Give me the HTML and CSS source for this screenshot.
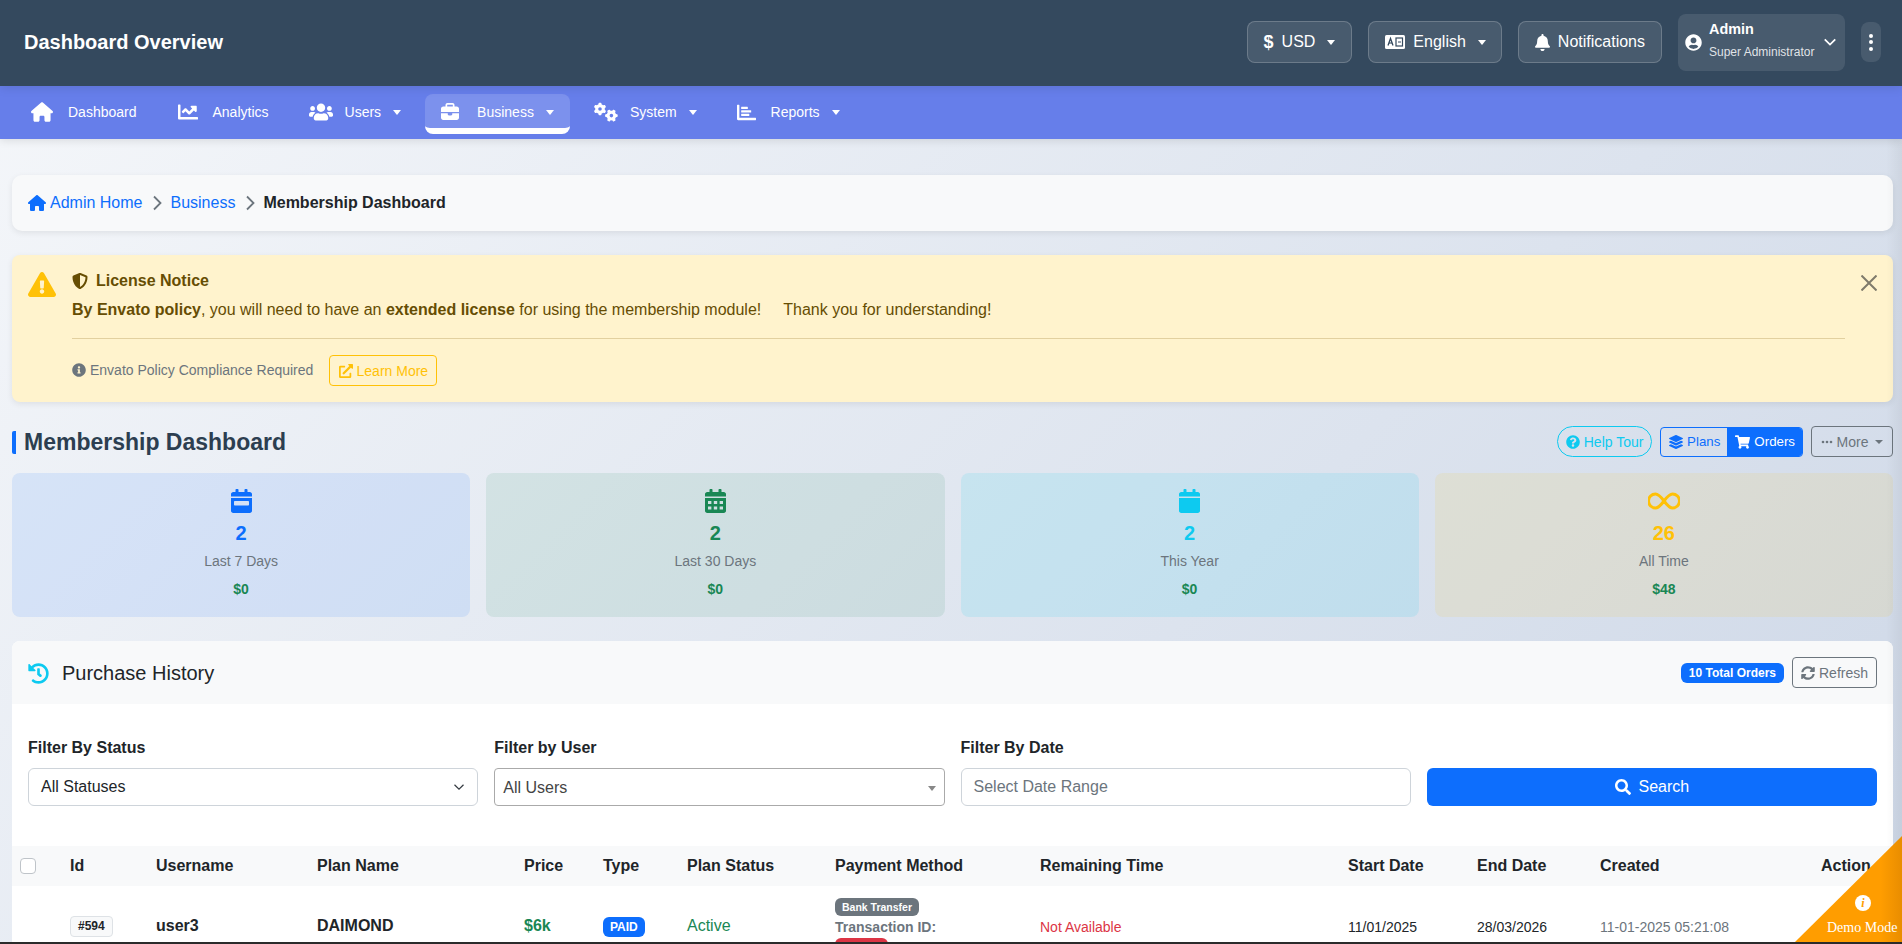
FILE: index.html
```html
<!DOCTYPE html>
<html lang="en">
<head>
  <meta charset="UTF-8" />
  <meta name="viewport" content="width=device-width, initial-scale=1.0" />
  <title>Membership Dashboard</title>
  <link rel="stylesheet" href="styles.css">
</head>
<body>
<div class="page">
  <header class="topbar">
    <div class="topbar-title">Dashboard Overview</div>
    <div class="topbar-actions">
      <button class="top-btn"><span class="dollar">$</span>USD<span class="caret"></span></button>
      <button class="top-btn top-btn-lang">
        <svg class="lang-icon" viewBox="0 0 20 14"><rect width="20" height="14" rx="1.5" fill="#fff"/><polyline points="3,10.5 5.5,3.5 8,10.5" fill="none" stroke="#34495e" stroke-width="1.3"/><line x1="4" y1="8" x2="7" y2="8" stroke="#34495e" stroke-width="1.1"/><rect x="11" y="3" width="6.5" height="8" fill="none" stroke="#34495e" stroke-width="1.2"/><line x1="13" y1="7" x2="16" y2="7" stroke="#34495e"/></svg>
        English<span class="caret"></span>
      </button>
      <button class="top-btn">
        <svg class="bell-icon" viewBox="0 0 448 512"><path d="M224 512c35.32 0 63.97-28.65 63.97-64H160.03c0 35.35 28.65 64 63.97 64zm215.39-149.71c-19.32-20.76-55.47-51.99-55.47-154.29 0-77.7-54.48-139.9-127.94-155.16V32c0-17.67-14.32-32-31.98-32s-31.98 14.33-31.98 32v20.84C118.56 68.1 64.08 130.3 64.08 208c0 102.3-36.15 133.53-55.47 154.29-6 6.45-8.66 14.16-8.61 21.71.11 16.4 12.98 32 32.1 32h383.8c19.12 0 32-15.6 32.1-32 .05-7.55-2.61-15.27-8.61-21.71z"/></svg>
        Notifications
      </button>
      <div class="user-box">
        <svg class="user-icon" viewBox="0 0 496 512"><path d="M248 8C111 8 0 119 0 256s111 248 248 248 248-111 248-248S385 8 248 8zm0 96c48.6 0 88 39.4 88 88s-39.4 88-88 88-88-39.4-88-88 39.4-88 88-88zm0 344c-58.7 0-111.3-26.6-146.5-68.2 18.8-35.4 55.6-59.8 98.5-59.8 2.4 0 4.8.4 7.1 1.1 13 4.2 26.6 6.9 40.9 6.9 14.3 0 28-2.7 40.9-6.9 2.3-.7 4.7-1.1 7.1-1.1 42.9 0 79.7 24.4 98.5 59.8C359.3 421.4 306.7 448 248 448z"/></svg>
        <div class="user-text">
          <div class="user-name">Admin</div>
          <div class="user-role">Super Administrator</div>
        </div>
        <svg class="user-chevron" viewBox="0 0 16 16"><polyline points="2,5 8,11 14,5"/></svg>
      </div>
      <div class="dots-btn"><i></i><i></i><i></i></div>
    </div>
  </header>

  <nav class="mainnav">
    <a class="nav-item nav-first">
      <svg class="nav-icon" width="22" height="20" viewBox="0 0 576 512"><path d="M575.8 255.5c0 18-15 32.1-32 32.1h-32l.7 160.2c0 2.7-.2 5.4-.5 8.1V472c0 22.1-17.9 40-40 40H456c-1.1 0-2.2 0-3.3-.1c-1.4 .1-2.8 .1-4.2 .1H416 392c-22.1 0-40-17.9-40-40V448 384c0-17.7-14.3-32-32-32H256c-17.7 0-32 14.3-32 32v64 24c0 22.1-17.9 40-40 40H160 128.1c-1.5 0-3-.1-4.5-.2c-1.2 .1-2.4 .2-3.6 .2H104c-22.1 0-40-17.9-40-40V360c0-.9 0-1.9 .1-2.8V287.600H32c-18 0-32-14-32-32.100c0-9 3-17 10-24L266.400 8c7-7 15-8 22-8s15 2 21 7L564.800 231.500c8 7 12 15 11 24z"/></svg>
      Dashboard
    </a>
    <a class="nav-item">
      <svg class="nav-icon" width="20" height="20" viewBox="0 0 512 512"><path d="M496 384H64V80c0-8.84-7.16-16-16-16H16C7.16 64 0 71.16 0 80v336c0 17.67 14.33 32 32 32h464c8.84 0 16-7.16 16-16v-32c0-8.84-7.16-16-16-16zM464 96H345.94c-21.38 0-32.09 25.85-16.97 40.97l32.4 32.4L288 242.75l-73.37-73.37c-12.5-12.5-32.76-12.5-45.25 0l-68.69 68.69c-6.25 6.25-6.25 16.38 0 22.63l22.62 22.62c6.25 6.25 16.38 6.25 22.63 0L192 237.25l73.37 73.37c12.5 12.5 32.76 12.5 45.25 0l96-96 32.4 32.4c15.12 15.12 40.97 4.41 40.97-16.97V112c.01-8.84-7.15-16-15.99-16z"/></svg>
      Analytics
    </a>
    <a class="nav-item">
      <svg class="nav-icon icon-tight" width="24" height="20" viewBox="0 0 640 512"><path d="M96 224c35.3 0 64-28.7 64-64s-28.7-64-64-64-64 28.7-64 64 28.7 64 64 64zm448 0c35.3 0 64-28.7 64-64s-28.7-64-64-64-64 28.7-64 64 28.7 64 64 64zm32 32h-64c-17.6 0-33.5 7.1-45.1 18.6 40.3 22.1 68.9 62 75.1 109.4h66c17.7 0 32-14.3 32-32v-32c0-35.3-28.7-64-64-64zm-256 0c61.9 0 112-50.1 112-112S381.9 32 320 32 208 82.1 208 144s50.1 112 112 112zm76.8 32h-8.3c-20.8 10-43.9 16-68.5 16s-47.6-6-68.5-16h-8.3C179.6 288 128 339.6 128 403.2V432c0 26.5 21.5 48 48 48h288c26.5 0 48-21.5 48-48v-28.8c0-63.6-51.6-115.2-115.2-115.2zm-223.7-13.4C161.5 263.1 145.6 256 128 256H64c-35.3 0-64 28.7-64 64v32c0 17.7 14.3 32 32 32h65.9c6.3-47.4 34.9-87.3 75.2-109.4z"/></svg>
      Users<span class="caret"></span>
    </a>
    <a class="nav-item active">
      <svg class="nav-icon icon-wide" width="18" height="20" viewBox="0 0 512 512"><path d="M184 48H328c4.4 0 8 3.6 8 8V96H176V56c0-4.4 3.6-8 8-8zm-56 8V96H64C28.7 96 0 124.700 0 160v96H192 320 512V160c0-35.300-28.700-64-64-64H384V56c0-30.900-25.100-56-56-56H184c-30.900 0-56 25.100-56 56zM512 288H320v32c0 17.700-14.300 32-32 32H224c-17.700 0-32-14.300-32-32V288H0V416c0 35.300 28.700 64 64 64H448c35.300 0 64-28.700 64-64V288z"/></svg>
      Business<span class="caret"></span>
    </a>
    <a class="nav-item">
      <svg class="nav-icon icon-gears" width="24" height="20" viewBox="0 0 640 512"><path d="M308.5 135.3c7.1-6.3 9.9-16.2 6.2-25c-2.3-5.3-4.8-10.5-7.6-15.5L304 89.4c-3-5-6.3-9.9-9.800-14.600c-5.700-7.600-15.700-10.100-24.700-7.100l-28.200 9.300c-10.700-8.800-23-16-36.200-20.900L199 27.100c-1.900-9.300-9.100-16.700-18.500-17.800C173.900 8.400 167.200 8 160.400 8h-.7c-6.800 0-13.500 .4-20.100 1.200c-9.400 1.100-16.600 8.600-18.500 17.800L115 56.100c-13.300 5-25.500 12.100-36.200 20.900L50.500 67.800c-9-3-19-.5-24.700 7.100c-3.500 4.700-6.800 9.600-9.900 14.600l-3 5.300c-2.800 5-5.300 10.200-7.600 15.600c-3.700 8.700-.9 18.600 6.200 25l22.200 19.800C32.600 161.900 32 168.900 32 176s.6 14.100 1.700 20.900L11.500 216.700c-7.100 6.300-9.900 16.200-6.200 25c2.300 5.300 4.800 10.500 7.600 15.600l3 5.200c3 5.100 6.300 9.900 9.900 14.600c5.700 7.600 15.700 10.100 24.700 7.100l28.200-9.300c10.700 8.800 23 16 36.200 20.900l6.100 29.100c1.900 9.300 9.100 16.700 18.500 17.800c6.700 .8 13.500 1.200 20.400 1.200s13.700-.4 20.400-1.200c9.400-1.100 16.600-8.600 18.500-17.800l6.100-29.100c13.300-5 25.500-12.100 36.200-20.900l28.200 9.300c9 3 19 .5 24.700-7.100c3.500-4.700 6.800-9.500 9.800-14.600l3.100-5.400c2.800-5 5.300-10.200 7.600-15.500c3.700-8.700 .9-18.600-6.200-25l-22.200-19.800c1.100-6.800 1.700-13.800 1.700-20.900s-.6-14.100-1.700-20.900l22.200-19.800zM112 176a48 48 0 1 1 96 0 48 48 0 1 1 -96 0zM504.700 500.500c6.300 7.100 16.200 9.900 25 6.200c5.300-2.300 10.500-4.800 15.500-7.600l5.400-3.100c5-3 9.900-6.300 14.600-9.800c7.600-5.700 10.100-15.700 7.100-24.700l-9.300-28.200c8.800-10.700 16-23 20.900-36.200l29.100-6.100c9.300-1.900 16.700-9.100 17.800-18.500c.8-6.700 1.200-13.500 1.200-20.400s-.4-13.700-1.200-20.400c-1.100-9.400-8.600-16.600-17.800-18.500L583.900 307c-5-13.300-12.100-25.500-20.900-36.200l9.300-28.200c3-9 .5-19-7.100-24.700c-4.700-3.500-9.600-6.800-14.600-9.900l-5.300-3c-5-2.800-10.200-5.300-15.600-7.600c-8.700-3.700-18.600-.9-25 6.200l-19.800 22.200c-6.800-1.100-13.800-1.700-20.900-1.700s-14.100 .6-20.900 1.700l-19.800-22.200c-6.300-7.100-16.200-9.900-25-6.200c-5.300 2.300-10.500 4.800-15.600 7.600l-5.200 3c-5.100 3-9.900 6.300-14.600 9.900c-7.600 5.700-10.100 15.700-7.100 24.700l9.300 28.200c-8.800 10.700-16 23-20.900 36.200L315.100 313c-9.300 1.900-16.700 9.100-17.800 18.500c-.8 6.700-1.200 13.500-1.200 20.400s.4 13.700 1.200 20.400c1.100 9.400 8.600 16.600 17.800 18.500l29.100 6.100c5 13.300 12.100 25.500 20.900 36.200l-9.300 28.200c-3 9-.5 19 7.100 24.700c4.700 3.500 9.500 6.800 14.600 9.800l5.400 3.100c5 2.800 10.200 5.300 15.500 7.600c8.700 3.700 18.600 .9 25-6.200l19.800-22.200c6.800 1.100 13.800 1.700 20.900 1.700s14.100-.6 20.900-1.700l19.800 22.200zM464 304a48 48 0 1 1 0 96 48 48 0 1 1 0-96z"/></svg>
      System<span class="caret"></span>
    </a>
    <a class="nav-item">
      <svg class="nav-icon" width="19" height="19" viewBox="0 20 512 440"><path d="M500 384c6.600 0 12 5.400 12 12v40c0 6.600-5.400 12-12 12H32c-17.700 0-32-14.300-32-32V44c0-6.600 5.400-12 12-12h40c6.600 0 12 5.400 12 12v340h436z"/><rect x="112" y="88" width="180" height="60" rx="10"/><rect x="112" y="180" width="270" height="60" rx="10"/><rect x="112" y="272" width="220" height="60" rx="10"/></svg>
      Reports<span class="caret"></span>
    </a>
  </nav>

  <main class="content">
    <div class="crumbs">
      <svg class="crumb-home" viewBox="0 0 576 512"><path d="M575.8 255.5c0 18-15 32.1-32 32.1h-32l.7 160.2c0 2.7-.2 5.4-.5 8.1V472c0 22.1-17.9 40-40 40H456c-1.1 0-2.2 0-3.3-.1c-1.4 .1-2.8 .1-4.2 .1H416 392c-22.1 0-40-17.9-40-40V448 384c0-17.7-14.3-32-32-32H256c-17.7 0-32 14.3-32 32v64 24c0 22.1-17.9 40-40 40H160 128.1c-1.5 0-3-.1-4.5-.2c-1.2 .1-2.4 .2-3.6 .2H104c-22.1 0-40-17.9-40-40V360c0-.9 0-1.9 .1-2.8V287.600H32c-18 0-32-14-32-32.100c0-9 3-17 10-24L266.400 8c7-7 15-8 22-8s15 2 21 7L564.800 231.500c8 7 12 15 11 24z"/></svg>
      <a class="crumb-link">Admin Home</a>
      <svg class="crumb-sep" viewBox="0 0 10 16"><polyline points="2,1.500 8.500,8 2,14.500"/></svg>
      <a class="crumb-link">Business</a>
      <svg class="crumb-sep" viewBox="0 0 10 16"><polyline points="2,1.500 8.500,8 2,14.500"/></svg>
      <strong>Membership Dashboard</strong>
    </div>

    <section class="notice">
      <svg class="notice-warn" viewBox="0 0 576 512"><path d="M569.517 440.013C587.975 472.007 564.806 512 527.94 512H48.054c-36.937 0-59.999-40.055-41.577-71.987L246.423 24.035c18.467-32.009 64.72-31.951 83.154 0l239.94 416.028zM288 354c-25.405 0-46 20.595-46 46s20.595 46 46 46 46-20.595 46-46-20.595-46-46-46zm-43.673-165.346l7.418 136c.347 6.364 5.609 11.346 11.982 11.346h48.546c6.373 0 11.635-4.982 11.982-11.346l7.418-136c.375-6.874-5.098-12.654-11.982-12.654h-63.383c-6.884 0-12.356 5.780-11.981 12.654z"/></svg>
      <div class="notice-body">
        <div class="notice-title">
          <svg class="shield" viewBox="0 0 512 512"><path d="M466.500 83.700l-192-80a48.150 48.150 0 0 0-36.900 0l-192 80C27.700 91.100 16 108.600 16 128c0 198.500 114.500 335.700 221.500 380.300 11.800 4.900 25.100 4.900 36.900 0C360.100 472.600 496 349.300 496 128c0-19.400-11.700-36.900-29.500-44.300zM256.100 446.300l-.1-381 175.900 73.300c-3.300 151.400-82.100 261.100-175.800 307.700z"/></svg>
          License Notice
        </div>
        <p class="notice-text"><strong>By Envato policy</strong>, you will need to have an <strong>extended license</strong> for using the membership module!<span class="notice-thanks">Thank you for understanding!</span></p>
        <hr class="notice-rule">
        <div class="notice-foot">
          <span class="notice-note">
            <svg class="note-icon" viewBox="0 0 512 512"><path d="M256 8C119.043 8 8 119.083 8 256c0 136.997 111.043 248 248 248s248-111.003 248-248C504 119.083 392.957 8 256 8zm0 110c23.196 0 42 18.804 42 42s-18.804 42-42 42-42-18.804-42-42 18.804-42 42-42zm56 254c0 6.627-5.373 12-12 12h-88c-6.627 0-12-5.373-12-12v-24c0-6.627 5.373-12 12-12h12v-64h-12c-6.627 0-12-5.373-12-12v-24c0-6.627 5.373-12 12-12h64c6.627 0 12 5.373 12 12v100h12c6.627 0 12 5.373 12 12v24z"/></svg>
            Envato Policy Compliance Required
          </span>
          <a class="learn-btn">
            <svg class="learn-icon" viewBox="0 0 512 512"><path d="M432 320h-32a16 16 0 0 0-16 16v112H64V128h144a16 16 0 0 0 16-16V80a16 16 0 0 0-16-16H48a48 48 0 0 0-48 48v352a48 48 0 0 0 48 48h352a48 48 0 0 0 48-48V336a16 16 0 0 0-16-16zM488 0H360c-21.370 0-32.050 25.910-17 41l35.730 35.730L135 320.370a24 24 0 0 0 0 34L157.670 377a24 24 0 0 0 34 0l243.610-243.680L471 169c15 15 41 4.500 41-17V24a24 24 0 0 0-24-24z"/></svg>
            Learn More
          </a>
        </div>
      </div>
      <svg class="notice-close" viewBox="0 0 16 16"><path d="M.5 .5l15 15M15.500 .5L.5 15.500"/></svg>
    </section>

    <div class="title-row">
      <h1 class="page-title">Membership Dashboard</h1>
      <div class="title-actions">
        <a class="help-btn">
          <svg class="btn-icon" viewBox="0 0 512 512"><path d="M504 256c0 136.997-111.043 248-248 248S8 392.997 8 256C8 119.083 119.043 8 256 8s248 111.083 248 248zM262.655 90c-54.497 0-89.255 22.957-116.549 63.758-3.536 5.286-2.353 12.415 2.715 16.258l34.699 26.310c5.205 3.947 12.621 3.008 16.665-2.122 17.864-22.658 30.113-35.797 57.303-35.797 20.429 0 45.698 13.148 45.698 32.958 0 14.976-12.363 22.667-32.534 33.976C247.128 238.528 216 254.941 216 296v4c0 6.627 5.373 12 12 12h56c6.627 0 12-5.373 12-12v-1.333c0-28.462 83.186-29.647 83.186-106.667 0-58.002-60.165-102-116.531-102zM256 338c-25.365 0-46 20.635-46 46 0 25.364 20.635 46 46 46s46-20.636 46-46c0-25.365-20.635-46-46-46z"/></svg>
          Help Tour
        </a>
        <div class="btn-pair">
          <a class="pair-btn">
            <svg class="btn-icon" viewBox="0 0 512 512"><path d="M12.410 148.020l232.940 105.670c6.800 3.090 14.490 3.090 21.290 0l232.940-105.670c16.550-7.510 16.550-32.520 0-40.030L266.650 2.310a25.607 25.607 0 0 0-21.290 0L12.410 107.980c-16.550 7.510-16.550 32.530 0 40.040zm487.180 88.280l-58.090-26.330-161.640 73.270c-7.560 3.430-15.590 5.170-23.860 5.170s-16.290-1.740-23.860-5.170L70.510 209.970l-58.100 26.330c-16.550 7.500-16.550 32.500 0 40l232.940 105.590c6.800 3.080 14.490 3.080 21.290 0L499.590 276.300c16.550-7.500 16.550-32.500 0-40zm0 127.800l-57.870-26.230-161.860 73.370c-7.560 3.430-15.590 5.170-23.860 5.170s-16.290-1.740-23.860-5.170L70.290 337.870 12.410 364.100c-16.550 7.500-16.550 32.500 0 40l232.940 105.590c6.800 3.080 14.490 3.080 21.290 0L499.590 404.100c16.550-7.500 16.550-32.500 0-40z"/></svg>
            Plans
          </a>
          <a class="pair-btn on">
            <svg class="btn-icon cart" viewBox="0 0 576 512"><path d="M528.120 301.319l47.273-208C578.806 78.301 567.391 64 551.990 64H159.208l-9.166-44.810C147.758 8.021 137.930 0 126.529 0H24C10.745 0 0 10.745 0 24v16c0 13.255 10.745 24 24 24h69.883l70.248 343.435C147.325 417.100 136 435.222 136 456c0 30.928 25.072 56 56 56s56-25.072 56-56c0-15.674-6.447-29.835-16.824-40h209.647C430.447 426.165 424 440.326 424 456c0 30.928 25.072 56 56 56s56-25.072 56-56c0-22.172-12.888-41.332-31.579-50.405l5.517-24.276c3.413-15.018-8.002-29.319-23.403-29.319H218.117l-6.545-32h293.145c11.206 0 20.920-7.754 23.403-18.681z"/></svg>
            Orders
          </a>
        </div>
        <a class="more-btn">
          <svg class="more-dots" viewBox="0 0 12 4"><circle cx="2" cy="2" r="1.300"/><circle cx="6" cy="2" r="1.300"/><circle cx="10" cy="2" r="1.300"/></svg>
          More<span class="caret"></span>
        </a>
      </div>
    </div>

    <div class="stats">
      <div class="stat stat-blue">
        <svg class="stat-icon" viewBox="0 0 448 512"><path d="M0 464c0 26.500 21.500 48 48 48h352c26.500 0 48-21.500 48-48V192H0v272zm64-192c0-8.800 7.200-16 16-16h288c8.800 0 16 7.200 16 16v64c0 8.800-7.200 16-16 16H80c-8.800 0-16-7.200-16-16v-64zM400 64h-48V16c0-8.800-7.200-16-16-16h-32c-8.800 0-16 7.200-16 16v48H160V16c0-8.800-7.200-16-16-16h-32c-8.800 0-16 7.200-16 16v48H48C21.500 64 0 85.500 0 112v48h448v-48c0-26.500-21.500-48-48-48z"/></svg>
        <div class="stat-num">2</div>
        <div class="stat-label">Last 7 Days</div>
        <div class="stat-money">$0</div>
      </div>
      <div class="stat stat-green">
        <svg class="stat-icon" viewBox="0 0 448 512"><path fill-rule="evenodd" d="M0 464c0 26.500 21.500 48 48 48h352c26.500 0 48-21.500 48-48V192H0v272zM64 256h72v64H64zM188 256h72v64h-72zM312 256h72v64h-72zM64 372h72v64H64zM188 372h72v64h-72zM312 372h72v64h-72zM400 64h-48V16c0-8.800-7.200-16-16-16h-32c-8.800 0-16 7.200-16 16v48H160V16c0-8.800-7.200-16-16-16h-32c-8.800 0-16 7.200-16 16v48H48C21.500 64 0 85.500 0 112v48h448v-48c0-26.500-21.500-48-48-48z"/></svg>
        <div class="stat-num">2</div>
        <div class="stat-label">Last 30 Days</div>
        <div class="stat-money">$0</div>
      </div>
      <div class="stat stat-cyan">
        <svg class="stat-icon" viewBox="0 0 448 512"><path d="M0 464c0 26.500 21.500 48 48 48h352c26.500 0 48-21.500 48-48V192H0v272zM400 64h-48V16c0-8.800-7.200-16-16-16h-32c-8.800 0-16 7.200-16 16v48H160V16c0-8.800-7.200-16-16-16h-32c-8.800 0-16 7.200-16 16v48H48C21.500 64 0 85.500 0 112v48h448v-48c0-26.500-21.500-48-48-48z"/></svg>
        <div class="stat-num">2</div>
        <div class="stat-label">This Year</div>
        <div class="stat-money">$0</div>
      </div>
      <div class="stat stat-yellow">
        <svg class="stat-icon infinity" viewBox="0 0 32 24"><path d="M16 12c-3-4-5.500-7-8.500-7a7 7 0 0 0 0 14c3 0 5.500-3 8.500-7s5.500-7 8.500-7a7 7 0 0 1 0 14c-3 0-5.500-3-8.500-7z"/></svg>
        <div class="stat-num">26</div>
        <div class="stat-label">All Time</div>
        <div class="stat-money">$48</div>
      </div>
    </div>

    <section class="orders">
      <div class="orders-head">
        <div class="orders-title">
          <svg class="history-icon" viewBox="0 0 512 512"><path d="M504 255.531c.253 136.640-111.180 248.372-247.820 248.468-59.015.042-113.223-20.530-155.822-54.911-11.077-8.940-11.905-25.541-1.839-35.607l11.267-11.267c8.609-8.609 22.353-9.551 31.891-1.984C173.062 425.135 212.781 440 256 440c101.705 0 184-82.311 184-184 0-101.705-82.311-184-184-184-48.814 0-93.149 18.969-126.068 49.932l50.754 50.754c10.080 10.080 2.941 27.314-11.313 27.314H24c-8.837 0-16-7.163-16-16V38.627c0-14.254 17.234-21.393 27.314-11.314l49.372 49.372C129.209 34.136 189.552 8 256 8c136.810 0 247.747 110.780 248 247.531zm-180.912 78.784l9.823-12.630c8.138-10.463 6.253-25.542-4.210-33.679L288 256.349V152c0-13.255-10.745-24-24-24h-16c-13.255 0-24 10.745-24 24v135.651l65.409 50.874c10.463 8.137 25.541 6.253 33.679-4.210z"/></svg>
          Purchase History
        </div>
        <div class="orders-tools">
          <span class="total-badge">10 Total Orders</span>
          <a class="refresh-btn">
            <svg class="btn-icon" viewBox="0 0 512 512"><path d="M370.720 133.280C339.458 104.008 298.888 87.962 255.848 88c-77.458.068-144.328 53.178-162.791 126.850-1.344 5.363-6.122 9.150-11.651 9.150H24.103c-7.498 0-13.194-6.807-11.807-14.176C33.933 94.924 134.813 8 256 8c66.448 0 126.791 26.136 171.315 68.685L463.030 40.970C478.149 25.851 504 36.559 504 57.941V192c0 13.255-10.745 24-24 24H345.941c-21.382 0-32.090-25.851-16.971-40.971l41.750-41.749zM32 296h134.059c21.382 0 32.090 25.851 16.971 40.971l-41.750 41.750c31.262 29.273 71.835 45.319 114.876 45.280 77.418-.070 144.315-53.144 162.787-126.849 1.344-5.363 6.122-9.150 11.651-9.150h57.304c7.498 0 13.194 6.807 11.807 14.176C478.067 417.076 377.187 504 256 504c-66.448 0-126.791-26.136-171.315-68.685L48.970 471.030C33.851 486.149 8 475.441 8 454.059V320c0-13.255 10.745-24 24-24z"/></svg>
            Refresh
          </a>
        </div>
      </div>

      <div class="filters">
        <div class="filter">
          <label>Filter By Status</label>
          <div class="field">All Statuses
            <svg class="field-chevron" viewBox="0 0 16 16"><polyline points="2,5 8,11 14,5"/></svg>
          </div>
        </div>
        <div class="filter">
          <label>Filter by User</label>
          <div class="field field-user">All Users<span class="caret"></span></div>
        </div>
        <div class="filter">
          <label>Filter By Date</label>
          <div class="field field-date">Select Date Range</div>
        </div>
        <div class="filter filter-action">
          <button class="search-btn">
            <svg class="search-icon" viewBox="0 0 512 512"><path d="M505 442.700L405.300 343c-4.500-4.500-10.600-7-17-7H372c27.600-35.300 44-79.700 44-128C416 93.100 322.900 0 208 0S0 93.100 0 208s93.100 208 208 208c48.300 0 92.700-16.400 128-44v16.300c0 6.400 2.500 12.500 7 17l99.700 99.700c9.400 9.400 24.600 9.400 33.900 0l28.300-28.300c9.400-9.400 9.400-24.600.1-34zM208 336c-70.700 0-128-57.200-128-128 0-70.700 57.200-128 128-128 70.700 0 128 57.200 128 128 0 70.700-57.200 128-128 128z"/></svg>
            Search
          </button>
        </div>
      </div>

      <table class="orders-table">
        <colgroup>
          <col class="c-check"><col class="c-id"><col class="c-user"><col class="c-plan"><col class="c-price"><col class="c-type"><col class="c-status"><col class="c-pay"><col class="c-remain"><col class="c-start"><col class="c-end"><col class="c-created"><col class="c-action">
        </colgroup>
        <thead>
          <tr>
            <th><span class="checkbox"></span></th>
            <th>Id</th><th>Username</th><th>Plan Name</th><th>Price</th><th>Type</th><th>Plan Status</th><th>Payment Method</th><th>Remaining Time</th><th>Start Date</th><th>End Date</th><th>Created</th><th>Action</th>
          </tr>
        </thead>
        <tbody>
          <tr>
            <td></td>
            <td><span class="id-tag">#594</span></td>
            <td class="strong">user3</td>
            <td class="strong">DAIMOND</td>
            <td class="price">$6k</td>
            <td><span class="type-tag">PAID</span></td>
            <td class="active-text">Active</td>
            <td>
              <span class="pay-tag">Bank Transfer</span>
              <div class="txn">Transaction ID:</div>
              <span class="txn-tag"></span>
            </td>
            <td class="remain">Not Available</td>
            <td class="date">11/01/2025</td>
            <td class="date">28/03/2026</td>
            <td class="date muted">11-01-2025 05:21:08</td>
            <td></td>
          </tr>
        </tbody>
      </table>
    </section>
  </main>

  <div class="edge-shade"></div>
  <div class="demo-ribbon">
    <span class="demo-info">i</span>
    <span class="demo-text">Demo Mode</span>
  </div>
  <div class="bottom-line"></div>
</div>
</body>
</html>
```

FILE: styles.css
```css
* {
  box-sizing: border-box;
}

html, body {
  margin: 0;
  height: 100%;
}

body {
  font-family: "Liberation Sans", Arial, sans-serif;
  font-size: 16px;
  color: #212529;
}

.page {
  position: relative;
  height: 100vh;
  overflow: hidden;
  background: linear-gradient(135deg, #f5f7fa 0%, #c3cfe2 100%) no-repeat;
  background-size: 100% 1700px;
}

.caret {
  display: inline-block;
  border-top: 5px solid currentColor;
  border-left: 4.5px solid transparent;
  border-right: 4.5px solid transparent;
  margin-left: 12px;
}

/* top bar */
.topbar {
  height: 86px;
  background: #34495e;
  display: flex;
  align-items: center;
  justify-content: space-between;
  padding: 0 21px 2px 24px;
  color: #fff;
  position: relative;
  z-index: 2;
  box-shadow: 0 2px 10px rgba(0, 0, 0, 0.1);
}

.topbar-title {
  font-size: 20px;
  font-weight: bold;
}

.topbar-actions {
  display: flex;
  align-items: center;
  gap: 16px;
}

.top-btn {
  height: 42px;
  padding: 0 16px;
  display: flex;
  align-items: center;
  font: inherit;
  font-size: 16px;
  color: #fff;
  background: rgba(255, 255, 255, 0.1);
  border: 1px solid rgba(255, 255, 255, 0.2);
  border-radius: 8px;
}

.top-btn-lang {
  padding-right: 15px;
}

.dollar {
  font-weight: bold;
  font-size: 18px;
  margin-right: 8px;
}

.lang-icon {
  width: 20px;
  height: 14px;
  margin-right: 8px;
}

.bell-icon {
  width: 15px;
  height: 17px;
  fill: #fff;
  margin-right: 8px;
}

.user-box {
  width: 167px;
  height: 57px;
  display: flex;
  align-items: center;
  padding: 0 8px 0 7px;
  background: rgba(255, 255, 255, 0.1);
  border-radius: 8px;
}

.user-icon {
  width: 17px;
  height: 17px;
  fill: #fff;
  margin-right: 7px;
}

.user-text {
  flex: 1;
  padding-bottom: 5px;
}

.user-name {
  font-size: 14.4px;
  font-weight: bold;
  margin-bottom: 8px;
}

.user-role {
  font-size: 12px;
  color: rgba(255, 255, 255, 0.85);
}

.user-chevron {
  width: 14px;
  height: 14px;
  fill: none;
  stroke: #fff;
  stroke-width: 2;
}

.dots-btn {
  width: 20px;
  height: 40px;
  background: rgba(255, 255, 255, 0.1);
  border-radius: 8px;
  display: flex;
  flex-direction: column;
  align-items: center;
  justify-content: center;
  gap: 2.5px;
}

.dots-btn i {
  width: 4px;
  height: 4px;
  border-radius: 50%;
  background: #fff;
}

/* main nav */
.mainnav {
  height: 53px;
  background: #667eea;
  display: flex;
  align-items: flex-start;
  gap: 8px;
  padding: 8px 0 0 15px;
  color: #fff;
  box-shadow: 0 2px 8px rgba(0, 0, 0, 0.1);
  position: relative;
  z-index: 1;
}

.nav-item {
  height: 40px;
  display: flex;
  align-items: center;
  padding: 0 16px 4px;
  font-size: 14px;
  border-radius: 8px;
}

.nav-first {
  padding-right: 17px;
}

.nav-item.active {
  background: rgba(255, 255, 255, 0.15);
  border-bottom: 6px solid #fff;
  padding-top: 2px;
  padding-bottom: 0;
}

.nav-icon {
  fill: #fff;
  margin-right: 15px;
}

.icon-tight {
  margin-right: 12px;
}

.icon-gears {
  margin-right: 12px;
}

.icon-wide {
  margin-right: 18px;
}

/* page content */
.content {
  padding: 36px 9px 0 12px;
}

.crumbs {
  height: 56px;
  display: flex;
  align-items: center;
  padding: 0 16px;
  background: #f8f9fa;
  border-radius: 10px;
  box-shadow: 0 2px 6px rgba(0, 0, 0, 0.08);
  margin-bottom: 24px;
}

.crumb-home {
  width: 18px;
  height: 16px;
  fill: #0d6efd;
  margin-right: 4px;
}

.crumb-link {
  color: #0d6efd;
}

.crumb-sep {
  width: 10px;
  height: 16px;
  margin: 0 8.5px 0 9.5px;
  fill: none;
  stroke: #6c757d;
  stroke-width: 1.8;
}

.notice {
  height: 147px;
  display: flex;
  position: relative;
  background: #fff3cd;
  border-radius: 8px;
  box-shadow: 0 2px 6px rgba(0, 0, 0, 0.08);
  padding: 16px 48px 0 16px;
  margin-bottom: 24px;
  color: #664d03;
}

.notice-warn {
  width: 28px;
  height: 25px;
  fill: #ffc107;
  margin: 1px 16px 0 0;
  flex: none;
}

.notice-body {
  flex: 1;
}

.notice-title {
  display: flex;
  align-items: center;
  font-weight: bold;
  height: 20px;
}

.shield {
  width: 16px;
  height: 16px;
  fill: #664d03;
  margin-right: 8px;
}

.notice-text {
  margin: 9px 0 0;
  line-height: 20px;
}

.notice-thanks {
  margin-left: 22px;
}

.notice-rule {
  margin: 18px 0 0;
  border: 0;
  border-top: 1px solid #e2d09f;
}

.notice-foot {
  display: flex;
  align-items: center;
  gap: 16px;
  margin-top: 16px;
  font-size: 14px;
}

.notice-note {
  display: flex;
  align-items: center;
  padding-bottom: 2px;
  color: #6c757d;
}

.note-icon {
  width: 14px;
  height: 14px;
  fill: #6c757d;
  margin-right: 4px;
}

.learn-btn {
  height: 31px;
  width: 108px;
  display: flex;
  align-items: center;
  justify-content: center;
  color: #ffc107;
  border: 1px solid #ffc107;
  border-radius: 4px;
}

.learn-icon {
  width: 14px;
  height: 14px;
  fill: #ffc107;
  margin-right: 4px;
}

.notice-close {
  position: absolute;
  top: 20px;
  right: 16px;
  width: 16px;
  height: 16px;
  stroke: #7f7a6b;
  stroke-width: 2;
  fill: none;
}

.title-row {
  height: 31px;
  display: flex;
  align-items: center;
  justify-content: space-between;
  margin-bottom: 16px;
}

.page-title {
  margin: 1px 0 0;
  font-size: 23px;
  font-weight: bold;
  color: #2c3e50;
  border-left: 4px solid #0d6efd;
  border-radius: 2px;
  padding-left: 8px;
  line-height: 23px;
}

.title-actions {
  display: flex;
  align-items: center;
  gap: 8px;
  font-size: 14px;
}

.btn-icon {
  width: 14px;
  height: 14px;
  fill: currentColor;
  margin-right: 4px;
}

.help-btn {
  height: 31px;
  width: 95px;
  display: flex;
  align-items: center;
  justify-content: center;
  color: #0dcaf0;
  border: 1px solid #0dcaf0;
  border-radius: 16px;
}

.btn-pair {
  display: flex;
  height: 30px;
  border: 1px solid #0d6efd;
  border-radius: 4px;
  overflow: hidden;
}

.pair-btn {
  display: flex;
  align-items: center;
  padding: 0 7px 0 8px;
  color: #0d6efd;
  font-size: 13.3px;
}

.pair-btn.on {
  background: #0d6efd;
  color: #fff;
}

.cart {
  width: 15px;
}

.more-btn {
  height: 31px;
  width: 82px;
  display: flex;
  align-items: center;
  justify-content: center;
  color: #6c757d;
  border: 1px solid #6c757d;
  border-radius: 4px;
}

.more-btn .caret {
  margin-left: 7px;
  border-top-width: 4.5px;
  border-left-width: 4px;
  border-right-width: 4px;
}

.more-dots {
  width: 12px;
  height: 4px;
  fill: currentColor;
  margin-right: 4px;
}

.stats {
  display: grid;
  grid-template-columns: repeat(4, 1fr);
  gap: 16px;
  margin-bottom: 24px;
}

.stat {
  height: 144px;
  border-radius: 8px;
  padding-top: 16px;
  text-align: center;
}

.stat-blue { background: rgba(13, 110, 253, 0.1); color: #0d6efd; }
.stat-green { background: rgba(25, 135, 84, 0.1); color: #198754; }
.stat-cyan { background: rgba(13, 202, 240, 0.12); color: #0dcaf0; }
.stat-yellow { background: rgba(255, 193, 7, 0.1); color: #ffc107; }

.stat-icon {
  display: block;
  width: 21px;
  height: 24px;
  margin: 0 auto;
  fill: currentColor;
}

.stat-icon.infinity {
  width: 32px;
  fill: none;
  stroke: currentColor;
  stroke-width: 3;
}

.stat-num {
  font-size: 20px;
  font-weight: bold;
  line-height: 24px;
  margin-top: 8px;
}

.stat-label {
  font-size: 14px;
  line-height: 16px;
  color: #6c757d;
  margin-top: 8px;
}

.stat-money {
  font-size: 14px;
  font-weight: bold;
  line-height: 16px;
  color: #198754;
  margin-top: 12px;
}

.orders {
  background: #fff;
  border-radius: 8px 8px 0 0;
}

.orders-head {
  height: 63px;
  display: flex;
  align-items: center;
  justify-content: space-between;
  padding: 0 16px;
  background: #f8f9fa;
  border-radius: 8px 8px 0 0;
}

.orders-title {
  display: flex;
  align-items: center;
  font-size: 20px;
  padding-top: 1px;
}

.history-icon {
  width: 21px;
  height: 21px;
  fill: #0dcaf0;
  margin-right: 13px;
}

.orders-tools {
  display: flex;
  align-items: center;
  gap: 8px;
}

.total-badge {
  height: 20px;
  padding: 0 8px;
  display: flex;
  align-items: center;
  font-size: 12px;
  font-weight: bold;
  color: #fff;
  background: #0d6efd;
  border-radius: 6px;
}

.refresh-btn {
  height: 31px;
  width: 85px;
  display: flex;
  align-items: center;
  justify-content: center;
  font-size: 14px;
  color: #6c757d;
  border: 1px solid #6c757d;
  border-radius: 4px;
}

.filters {
  display: grid;
  grid-template-columns: repeat(4, 1fr);
  gap: 16px;
  padding: 34px 16px 40px;
}

.filter label {
  display: block;
  font-weight: bold;
  line-height: 20px;
  margin-bottom: 10px;
}

.filter-action {
  align-self: end;
}

.field {
  height: 38px;
  display: flex;
  align-items: center;
  justify-content: space-between;
  padding: 0 12px;
  color: #212529;
  border: 1px solid #ced4da;
  border-radius: 6px;
}

.field-chevron {
  width: 12px;
  height: 12px;
  fill: none;
  stroke: #343a40;
  stroke-width: 1.6;
}

.field-user {
  padding: 2px 8px 0;
  color: #444;
  border-color: #aaa;
  border-radius: 4px;
}

.field-user .caret {
  color: #888;
  margin-left: 0;
  border-top-width: 5px;
  border-left-width: 4px;
  border-right-width: 4px;
}

.field-date {
  color: #6c757d;
}

.search-btn {
  width: 100%;
  height: 38px;
  font: inherit;
  color: #fff;
  background: #0d6efd;
  border: 0;
  border-radius: 6px;
  display: flex;
  align-items: center;
  justify-content: center;
}

.search-icon {
  width: 16px;
  height: 16px;
  fill: #fff;
  margin-right: 8px;
}

.orders-table {
  width: 100%;
  border-collapse: collapse;
  table-layout: fixed;
}

.c-check { width: 50px; }
.c-id { width: 86px; }
.c-user { width: 161px; }
.c-plan { width: 207px; }
.c-price { width: 79px; }
.c-type { width: 84px; }
.c-status { width: 148px; }
.c-pay { width: 205px; }
.c-remain { width: 308px; }
.c-start { width: 129px; }
.c-end { width: 123px; }
.c-created { width: 221px; }
.c-action { width: 80px; }

.orders-table th {
  height: 40px;
  padding: 0 8px;
  text-align: left;
  font-size: 16px;
  background: #f8f9fa;
  white-space: nowrap;
}

.orders-table td {
  padding: 11px 8px;
  vertical-align: middle;
  white-space: nowrap;
}

.orders-table td.strong,
.orders-table td.price,
.orders-table td.active-text {
  padding-bottom: 13px;
}

.checkbox {
  display: block;
  width: 16px;
  height: 16px;
  background: #fff;
  border: 1px solid #bfc4c9;
  border-radius: 4px;
}

.id-tag {
  display: inline-block;
  height: 21px;
  line-height: 19px;
  padding: 0 7px;
  font-size: 12px;
  font-weight: bold;
  background: #f8f9fa;
  border: 1px solid #dee2e6;
  border-radius: 4px;
}

.strong {
  font-weight: bold;
}

.price {
  font-weight: bold;
  color: #198754;
}

.type-tag {
  display: inline-block;
  height: 20px;
  line-height: 20px;
  padding: 0 7px;
  font-size: 12px;
  font-weight: bold;
  color: #fff;
  background: #0d6efd;
  border-radius: 6px;
}

.active-text {
  color: #198754;
}

.pay-tag {
  display: inline-block;
  height: 18px;
  line-height: 18px;
  padding: 0 7px;
  font-size: 10.5px;
  font-weight: bold;
  color: #fff;
  background: #6c757d;
  border-radius: 6px;
}

.txn {
  font-size: 14px;
  font-weight: bold;
  color: #6c757d;
  line-height: 22px;
}

.txn-tag {
  display: block;
  width: 53px;
  height: 18px;
  background: #dc3545;
  border-radius: 6px;
}

.remain {
  font-size: 14px;
  color: #dc3545;
}

.date {
  font-size: 14px;
}

.muted {
  color: #6c757d;
}

/* overlays */
.edge-shade {
  position: absolute;
  top: 0;
  right: 0;
  bottom: 0;
  width: 16px;
  background: linear-gradient(90deg, rgba(0, 0, 0, 0), rgba(0, 0, 0, 0.05));
  pointer-events: none;
}

.demo-ribbon {
  position: absolute;
  right: 0;
  bottom: 2px;
  width: 107px;
  height: 106px;
  background: linear-gradient(90deg, #ff9d00 80%, #e98d00);
  clip-path: polygon(100% 0, 100% 100%, 0 100%);
  z-index: 3;
}

.demo-info {
  position: absolute;
  left: 60px;
  top: 59px;
  width: 16px;
  height: 16px;
  text-align: center;
  font: italic bold 12px/16px "Liberation Serif", serif;
  color: #ff9d00;
  background: #fff;
  border-radius: 50%;
}

.demo-text {
  position: absolute;
  left: 32px;
  top: 84px;
  font-family: "Liberation Serif", serif;
  font-size: 14px;
  color: #fff;
  white-space: nowrap;
}

.bottom-line {
  position: absolute;
  left: 0;
  right: 0;
  bottom: 0;
  height: 2px;
  background: #2b2b2b;
  z-index: 4;
}
```
